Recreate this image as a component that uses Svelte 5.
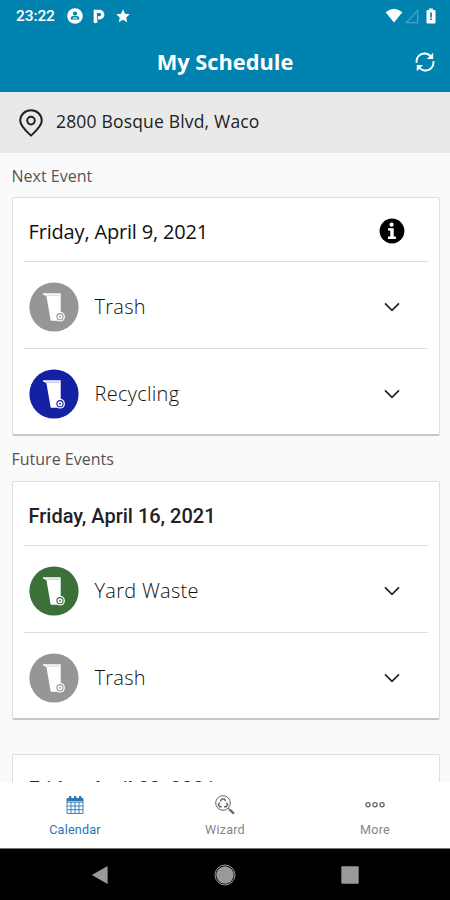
<script lang="ts">
  interface Pickup {
    name: string;
    color: string;
  }

  interface EventDay {
    date: string;
    pickups: Pickup[];
  }

  const trash: Pickup = { name: 'Trash', color: '#969696' };
  const recycling: Pickup = { name: 'Recycling', color: '#1421a3' };
  const yardWaste: Pickup = { name: 'Yard Waste', color: '#3b7138' };

  const nextEvent: EventDay = { date: 'Friday, April 9, 2021', pickups: [trash, recycling] };
  const futureEvents: EventDay[] = [
    { date: 'Friday, April 16, 2021', pickups: [yardWaste, trash] },
    { date: 'Friday, April 23, 2021', pickups: [trash, recycling] }
  ];

  let activeTab = $state('Calendar');
</script>

{#snippet card(day: EventDay, next: boolean)}
  <article class="card">
    <header class="card-date" class:next>
      <h3>{day.date}</h3>
      {#if next}
        <svg class="info" width="26" height="26" viewBox="0 0 26 26">
          <circle cx="13" cy="13" r="12.4" fill="#000" />
          <circle cx="12.6" cy="6.7" r="2.1" fill="#fff" />
          <path d="M9 10.2h5.7v8.4h2.2v2.4H9v-2.4h2.3v-6H9z" fill="#fff" />
        </svg>
      {/if}
    </header>
    {#each day.pickups as pickup}
      <div class="pickup">
        <svg class="bin" width="50" height="50" viewBox="0 0 50 50">
          <circle cx="25" cy="25" r="24.6" fill={pickup.color} />
          <path d="M14 11.2h17.7v20l-4 7.6h-6L17.4 14 14 12.6z" fill="#fff" />
          <path d="M17.5 13.2h13" stroke={pickup.color} stroke-width=".6" opacity=".6" />
          <circle cx="31" cy="34.7" r="4.9" fill="#fff" />
          <circle cx="31" cy="34.7" r="3.1" fill="none" stroke={pickup.color} stroke-width="1.1" />
          <circle cx="31" cy="34.7" r=".9" fill={pickup.color} />
        </svg>
        <span>{pickup.name}</span>
        <svg class="chevron" width="18" height="12" viewBox="0 0 18 12">
          <path d="M2 2.4l7 7 7-7" fill="none" stroke="#222" stroke-width="1.7" />
        </svg>
      </div>
    {/each}
  </article>
{/snippet}

<div class="screen">
  <div class="top">
    <div class="status-bar">
      <span class="time">23:22</span>
      <svg class="status-user" width="16" height="16" viewBox="0 0 16 16">
        <circle cx="8" cy="8" r="7.8" fill="#fff" />
        <circle cx="8" cy="5.5" r="2.1" fill="#0083ae" />
        <path d="M3.8 11.5V10c0-1.4 1.6-2.2 4.2-2.2s4.2.8 4.2 2.2v1.5z" fill="#0083ae" />
        <path d="M5.8 10h4.4" stroke="#fff" stroke-width="1" />
      </svg>
      <svg class="status-parking" width="12" height="15" viewBox="0 0 12 15">
        <path d="M2.3 7V2.3h4.2a3.3 3.3 0 010 6.6H4.8" fill="none" stroke="#fff" stroke-width="3.2" />
        <circle cx="2.5" cy="12.2" r="2" fill="#fff" />
        <path d="M.7 6.4h3.2v5.5H.7z" fill="#fff" />
      </svg>
      <svg class="status-star" width="14" height="14" viewBox="0 0 14 14">
        <path d="M7 .3l2 4.4 4.8.5-3.6 3.2 1 4.8L7 10.8l-4.2 2.4 1-4.8L.2 5.2 5 4.7z" fill="#fff" />
      </svg>
      <div class="signals">
        <svg width="18" height="16" viewBox="0 0 18 16">
          <path d="M.6 4.2Q9-2.8 17.4 4.2L9 14.5z" fill="#fff" />
        </svg>
        <svg width="14" height="15" viewBox="0 0 14 15">
          <path d="M12.6 1.6v12H1.2z" fill="none" stroke="#45a2c4" stroke-width="1.3" />
        </svg>
        <svg class="battery" width="10" height="16" viewBox="0 0 10 16">
          <path d="M3 .5h4V2h1.5q1 0 1 1v11.6q0 1-1 1h-7q-1 0-1-1V3q0-1 1-1H3z" fill="#fff" />
          <path d="M5 4.5v5M5 10.6v1.5" stroke="#0083ae" stroke-width="1.8" />
        </svg>
      </div>
    </div>
    <div class="title-bar">
      <h1>My Schedule</h1>
      <svg class="refresh" width="20" height="20" viewBox="0 0 20 20">
        <g fill="none" stroke="#fff" stroke-width="1.9">
          <path d="M1.6 10.8C.9 4.3 6.2 1 10.5 1.5c2.7.3 4.6 1.9 5.8 3.7" />
          <path d="M18.4 9.2c.7 6.5-4.6 9.8-8.9 9.3-2.7-.3-4.6-1.9-5.8-3.7" />
        </g>
        <path d="M18.2.8V7h-6.3zM1.8 19.2V13h6.3z" fill="#fff" />
      </svg>
    </div>
  </div>

  <div class="address">
    <svg width="24" height="28" viewBox="0 0 24 28">
      <path d="M12 26.6C7.5 22.5 1.2 17.3 1.2 11.6a10.8 10.4 0 0121.6 0c0 5.7-6.3 10.9-10.8 15z" fill="none" stroke="#222" stroke-width="2" stroke-linejoin="round" />
      <circle cx="12" cy="11.6" r="3.8" fill="none" stroke="#222" stroke-width="2" />
    </svg>
    <span>2800 Bosque Blvd, Waco</span>
  </div>

  <main>
    <h2>Next Event</h2>
    {@render card(nextEvent, true)}
    <h2 class="future">Future Events</h2>
    {#each futureEvents as day}
      {@render card(day, false)}
    {/each}
  </main>

  <nav class="tabs">
    <button class:active={activeTab === 'Calendar'} onclick={() => (activeTab = 'Calendar')}>
      <svg width="18" height="20" viewBox="0 0 18 20">
        <path d="M1 3.5h16v15H1zM1 7.2h16M1 11h16M1 14.7h16M5 7v11.5M9 7v11.5M13 7v11.5" fill="none" stroke="currentColor" stroke-width=".9" />
        <path d="M1 3.5h16v2.7H1zM3 1h2.3v3H3zM8 1h2.3v3H8zM13 1h2.3v3H13z" fill="currentColor" />
      </svg>
      <span>Calendar</span>
    </button>
    <button class:active={activeTab === 'Wizard'} onclick={() => (activeTab = 'Wizard')}>
      <svg width="20" height="20" viewBox="0 0 20 20">
        <g fill="none" stroke="#666">
          <circle cx="8" cy="8" r="7.3" stroke-width="1" />
          <path d="M5.3 6.4l1.5-2.5h2.6l1.3 2.2M11.6 7.7l1 2-1.3 2H9M6.8 11.7H4.6L3.5 9.6l1.1-1.9" stroke-width="1.5" />
          <path d="M13.2 13.2l1.3 1.3" stroke-width="1.2" />
          <path d="M14.5 14.5l4.4 4.2" stroke-width="2.4" />
        </g>
      </svg>
      <span>Wizard</span>
    </button>
    <button class:active={activeTab === 'More'} onclick={() => (activeTab = 'More')}>
      <svg width="20" height="20" viewBox="0 0 20 20">
        <g fill="none" stroke="#666" stroke-width="1.3">
          <circle cx="3" cy="9.8" r="2.1" />
          <circle cx="10" cy="9.8" r="2.1" />
          <circle cx="17" cy="9.8" r="2.1" />
        </g>
      </svg>
      <span>More</span>
    </button>
  </nav>

  <div class="system-nav">
    <svg width="18" height="20" viewBox="0 0 18 20"><path d="M.8 10L16.6 1v18z" fill="#999" /></svg>
    <svg width="22" height="22" viewBox="0 0 22 22">
      <circle cx="11" cy="11" r="10" fill="none" stroke="#999" stroke-width="1" />
      <circle cx="11" cy="11" r="8.7" fill="#999" />
    </svg>
    <svg width="18" height="18" viewBox="0 0 18 18"><rect x=".3" y=".3" width="17.4" height="17.4" rx="1" fill="#999" /></svg>
  </div>
</div>

<style>
  :global(body) {
    margin: 0;
  }

  .screen {
    display: flex;
    flex-direction: column;
    width: 450px;
    height: 900px;
    overflow: hidden;
    background: #fafafa;
    font-family: 'Open Sans', sans-serif;
  }

  svg {
    display: block;
    flex: none;
  }

  h1,
  h2,
  h3 {
    margin: 0;
    white-space: nowrap;
  }

  .top {
    flex: none;
    height: 92px;
    background: #0083ae;
    color: #fff;
  }

  .status-bar {
    display: flex;
    align-items: center;
    box-sizing: border-box;
    height: 32px;
    padding: 0 14px 0 16px;
  }

  .time {
    width: 51px;
    font: 500 15.5px Roboto, sans-serif;
    letter-spacing: -0.1px;
  }

  .status-parking {
    margin-left: 10px;
  }

  .status-star {
    margin-left: 11px;
  }

  .signals {
    display: flex;
    align-items: center;
    gap: 2px;
    margin-left: auto;
  }

  .battery {
    margin-left: 5px;
  }

  .title-bar {
    display: grid;
    grid-template-columns: 1fr auto 1fr;
    align-items: center;
    box-sizing: border-box;
    height: 60px;
    padding: 0 15px;
  }

  h1 {
    grid-column: 2;
    margin-top: -2px;
    font-size: 21.8px;
    font-weight: 700;
  }

  .refresh {
    justify-self: end;
  }

  .address {
    display: flex;
    flex: none;
    align-items: center;
    gap: 13px;
    box-sizing: border-box;
    height: 61px;
    padding: 0 19px;
    background: #e9e9e9;
    color: #222;
    font-size: 17.5px;
    letter-spacing: 0.18px;
  }

  .address span {
    margin-top: -3px;
  }

  main {
    flex: 1;
    min-height: 0;
    overflow: hidden;
    padding: 0 10.5px 0 11.5px;
  }

  h2 {
    height: 44px;
    color: #555;
    font-size: 16px;
    font-weight: 400;
    line-height: 46px;
  }

  h2.future {
    height: 45px;
    line-height: 47px;
  }

  .card {
    box-sizing: border-box;
    height: 239px;
    padding: 0 11px;
    border: 1px solid #dedede;
    border-bottom: 2px solid #c9c9c9;
    border-radius: 2px;
    background: #fff;
  }

  .card + .card {
    margin-top: 34px;
  }

  .card-date {
    display: flex;
    align-items: center;
    justify-content: space-between;
    box-sizing: border-box;
    height: 63px;
    padding: 0 23px 0 5px;
  }

  .card-date h3 {
    margin-top: 4px;
    color: #222;
    font: 500 20px Roboto, sans-serif;
  }

  .card-date.next h3 {
    color: #111;
    font: 400 20px 'Open Sans', sans-serif;
    letter-spacing: -0.17px;
  }

  .info {
    margin-top: 3px;
  }

  .pickup {
    display: flex;
    align-items: center;
    box-sizing: border-box;
    height: 87px;
    padding: 3px 27px 0 5px;
    border-top: 1px solid #dedede;
    color: #111;
    font-size: 20px;
    font-weight: 300;
    letter-spacing: 0.28px;
  }

  .pickup span {
    margin-left: 16px;
  }

  .chevron {
    margin-left: auto;
  }

  .tabs {
    display: grid;
    grid-template-columns: repeat(3, 1fr);
    flex: none;
    box-sizing: border-box;
    height: 66px;
    background: #fff;
  }

  .tabs button {
    display: flex;
    flex-direction: column;
    align-items: center;
    gap: 7px;
    padding: 13px 0 0;
    border: 0;
    background: none;
    color: #858585;
    font: 400 12.6px Roboto, sans-serif;
    letter-spacing: 0.2px;
  }

  .tabs button.active {
    color: #2b76b0;
  }

  .system-nav {
    display: flex;
    flex: none;
    align-items: center;
    justify-content: space-between;
    box-sizing: border-box;
    height: 52px;
    padding: 0 91px;
    border-top: 1px solid #777;
    background: #000;
  }
</style>
